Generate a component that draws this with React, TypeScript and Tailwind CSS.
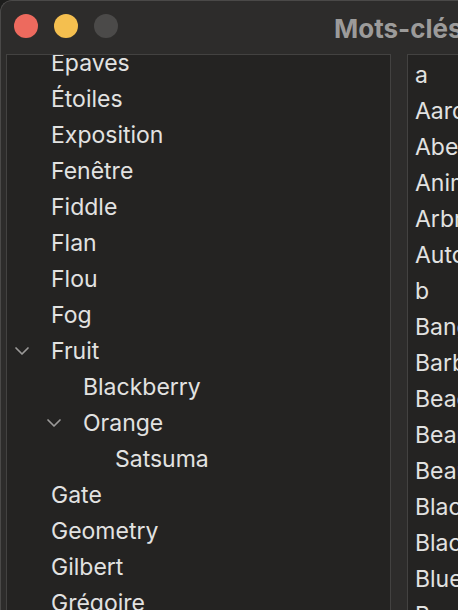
import React from "react";

type Row = { label: string; level: number; open?: boolean };

const tree: Row[] = [
  { label: "Epaves", level: 0 },
  { label: "Étoiles", level: 0 },
  { label: "Exposition", level: 0 },
  { label: "Fenêtre", level: 0 },
  { label: "Fiddle", level: 0 },
  { label: "Flan", level: 0 },
  { label: "Flou", level: 0 },
  { label: "Fog", level: 0 },
  { label: "Fruit", level: 0, open: true },
  { label: "Blackberry", level: 1 },
  { label: "Orange", level: 1, open: true },
  { label: "Satsuma", level: 2 },
  { label: "Gate", level: 0 },
  { label: "Geometry", level: 0 },
  { label: "Gilbert", level: 0 },
  { label: "Grégoire", level: 0 },
  { label: "Guitare", level: 0 },
];

const keywords = [
  "a",
  "Aardvark",
  "Abeille",
  "Animaux",
  "Arbre",
  "Automne",
  "b",
  "Bangkok",
  "Barbe",
  "Beach",
  "Bear",
  "Beauté",
  "Black",
  "Blackberry",
  "Blue",
  "Brume",
  "Bruxelles",
];

function Chevron() {
  return (
    <svg width="16" height="10" viewBox="0 0 16 10" fill="none">
      <path d="M2 2 L8 8 L14 2" stroke="#9b9a99" strokeWidth="1.7" strokeLinecap="round" strokeLinejoin="round" />
    </svg>
  );
}

export default function App() {
  return (
    <div className="w-[458px] h-[610px] overflow-hidden bg-[#1d1d1c]" style={{ fontFamily: "Inter, 'Noto Sans', sans-serif" }}>
      <div className="w-[520px] h-[640px] rounded-tl-[12px] border-l border-t border-[#4a4948] bg-[#2d2c2b] flex flex-col">
        {/* Title bar */}
        <div className="h-[53px] flex items-start pt-[13px] pl-[13px]">
          <div className="flex gap-[16px] shrink-0">
            <span className="h-[24px] w-[24px] rounded-full bg-[#ed6a5e]"></span>
            <span className="h-[24px] w-[24px] rounded-full bg-[#f4bf4f]"></span>
            <span className="h-[24px] w-[24px] rounded-full bg-[#4b4a49]"></span>
          </div>
          <h1 className="ml-[216px] mt-[-5px] text-[26px] font-bold text-[#9c9b9a] whitespace-nowrap">Mots-clés</h1>
        </div>

        {/* Panels */}
        <div className="flex flex-1 pl-[5px] gap-[16px] min-h-0">
          <div className="w-[385px] shrink-0 border border-[#434241] bg-[#242322] overflow-hidden">
            <div className="mt-[-10px]">
              {tree.map((r) => (
                <div key={r.label} className="h-[36px] flex items-center">
                  <div style={{ width: r.level * 32 }} className="shrink-0"></div>
                  <div className="w-[30px] shrink-0 flex items-center justify-center">
                    {r.open ? <Chevron /> : null}
                  </div>
                  <span className="ml-[14px] text-[23px] text-[#e2e2e1] whitespace-nowrap">{r.label}</span>
                </div>
              ))}
            </div>
          </div>

          <div className="w-[100px] shrink-0 border border-[#434241] bg-[#242322] overflow-hidden">
            <div className="pt-[2px] pl-[7px]">
              {keywords.map((k) => (
                <div key={k} className="h-[36px] flex items-center">
                  <span className="text-[23px] text-[#e2e2e1] whitespace-nowrap">{k}</span>
                </div>
              ))}
            </div>
          </div>
        </div>
      </div>
    </div>
  );
}
